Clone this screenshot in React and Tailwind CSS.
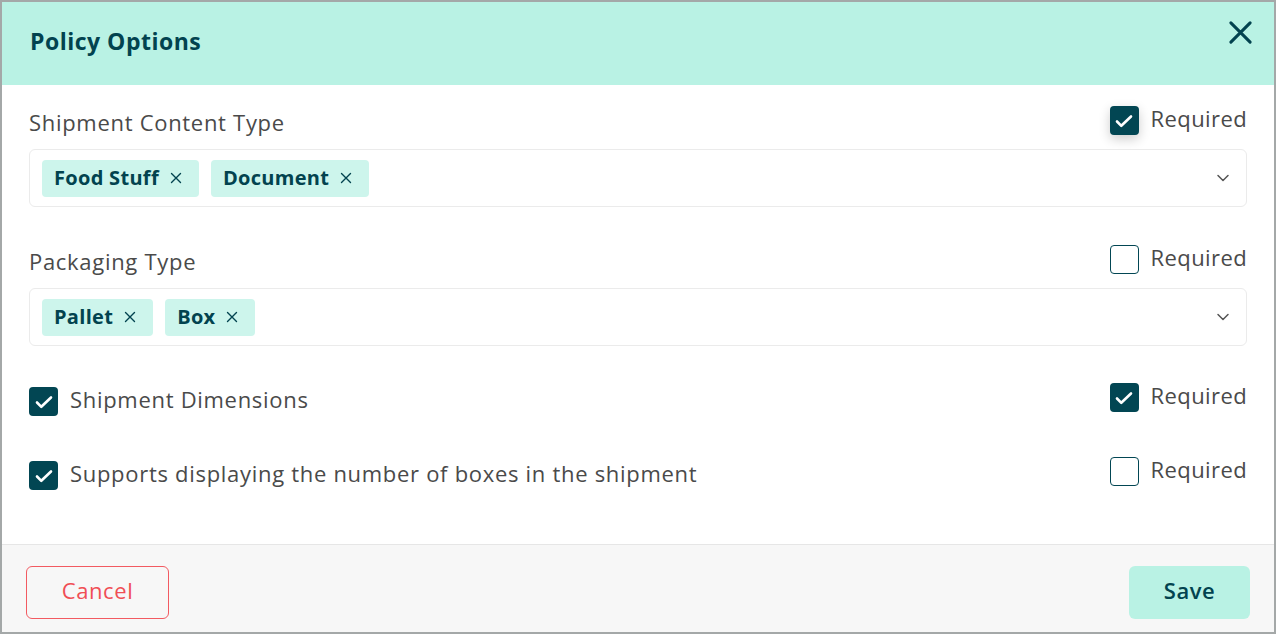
import React, { useState } from 'react'

const font = { fontFamily: '"Open Sans", "Noto Sans", sans-serif' }

function Check({ checked, shadow, onChange }) {
  return (
    <button
      type="button"
      onClick={onChange}
      className={`flex h-[29px] w-[29px] shrink-0 items-center justify-center rounded-[4px] ${checked ? 'bg-[#024653]' : 'border border-[#024653] bg-white'} ${shadow ? 'shadow-[0_4px_12px_rgba(0,0,0,0.2)]' : ''}`}
    >
      {checked && (
        <svg width="24" height="24" viewBox="0 0 24 24" fill="none" stroke="white" strokeWidth="2.6" strokeLinecap="round" strokeLinejoin="round">
          <path d="M5 12.5l4.3 4.3L19 7.5" />
        </svg>
      )}
    </button>
  )
}

function Required({ checked, shadow }) {
  const [on, setOn] = useState(checked)
  return (
    <div className="flex items-center gap-3">
      <Check checked={on} shadow={shadow} onChange={() => setOn(!on)} />
      <span className="-mt-[5px] text-[22px] leading-[29px] tracking-[0.4px] text-[#4a4a4a]">Required</span>
    </div>
  )
}

function Chip({ label }) {
  return (
    <span className="flex h-[37px] items-center gap-[11px] rounded-[4px] bg-[#cdf5ec] pl-3 pr-[17px] text-[20px] font-bold tracking-[0.3px] text-[#02434f]">
      {label}
      <svg width="12" height="12" viewBox="0 0 12 12" stroke="#02434f" strokeWidth="1.4" strokeLinecap="round">
        <path d="M1.5 1.5l9 9M10.5 1.5l-9 9" />
      </svg>
    </span>
  )
}

function MultiSelect({ items }) {
  return (
    <div className="flex h-[58px] items-center justify-between rounded-[6px] border border-[#ebebeb] pl-3 pr-4">
      <div className="flex gap-3">
        {items.map((i) => <Chip key={i} label={i} />)}
      </div>
      <svg width="14" height="14" viewBox="0 0 14 14" fill="none" stroke="#555" strokeWidth="1.5" strokeLinecap="round" strokeLinejoin="round">
        <path d="M2 4.5l5 5 5-5" />
      </svg>
    </div>
  )
}

export default function App() {
  const [dims, setDims] = useState(true)
  const [boxes, setBoxes] = useState(true)
  const label = 'text-[22px] leading-[29px] tracking-[0.7px] text-[#4a4a4a]'
  return (
    <div style={font} className="flex h-[634px] w-[1276px] flex-col border-2 border-[#a4a8a8] bg-white">
      <div className="flex h-[83px] shrink-0 items-center justify-between bg-[#b9f2e4] pl-[28px] pr-[21px]">
        <h2 className="-mt-[4px] text-[23px] font-bold tracking-[0.5px] text-[#02434f]">Policy Options</h2>
        <svg className="-mt-[23px]" width="25" height="25" viewBox="0 0 26 26" stroke="#02434f" strokeWidth="3.2" strokeLinecap="round">
          <path d="M3 3l20 20M23 3L3 23" />
        </svg>
      </div>

      <div className="flex flex-1 flex-col px-[27px]">
        <div className="mt-[21px] flex items-start justify-between">
          <span className={`mt-[2px] ${label}`}>Shipment Content Type</span>
          <Required checked shadow />
        </div>
        <div className="mt-[12px]">
          <MultiSelect items={['Food Stuff', 'Document']} />
        </div>

        <div className="mt-[38px] flex items-start justify-between">
          <span className={`mt-[2px] ${label}`}>Packaging Type</span>
          <Required checked={false} />
        </div>
        <div className="mt-[12px]">
          <MultiSelect items={['Pallet', 'Box']} />
        </div>

        <div className="mt-[37px] flex items-start justify-between">
          <div className="mt-[4px] flex items-center gap-3">
            <Check checked={dims} onChange={() => setDims(!dims)} />
            <span className={`-mt-[5px] ${label}`}>Shipment Dimensions</span>
          </div>
          <Required checked />
        </div>

        <div className="mt-[41px] flex items-start justify-between">
          <div className="mt-[4px] flex items-center gap-3">
            <Check checked={boxes} onChange={() => setBoxes(!boxes)} />
            <span className={`-mt-[5px] ${label}`}>Supports displaying the number of boxes in the shipment</span>
          </div>
          <Required checked={false} />
        </div>
      </div>

      <div className="flex h-[88px] shrink-0 items-start justify-between border-t border-[#e6e6e6] bg-[#f7f7f7] px-[24px] pt-[21px]">
        <button className="h-[53px] w-[143px] rounded-[6px] border border-[#f25a61] pb-[5px] text-[22px] tracking-[0.6px] text-[#f04e55]">Cancel</button>
        <button className="h-[53px] w-[121px] rounded-[6px] bg-[#b9f2e4] pb-[5px] text-[22px] font-semibold tracking-[0.5px] text-[#02434f]">Save</button>
      </div>
    </div>
  )
}
